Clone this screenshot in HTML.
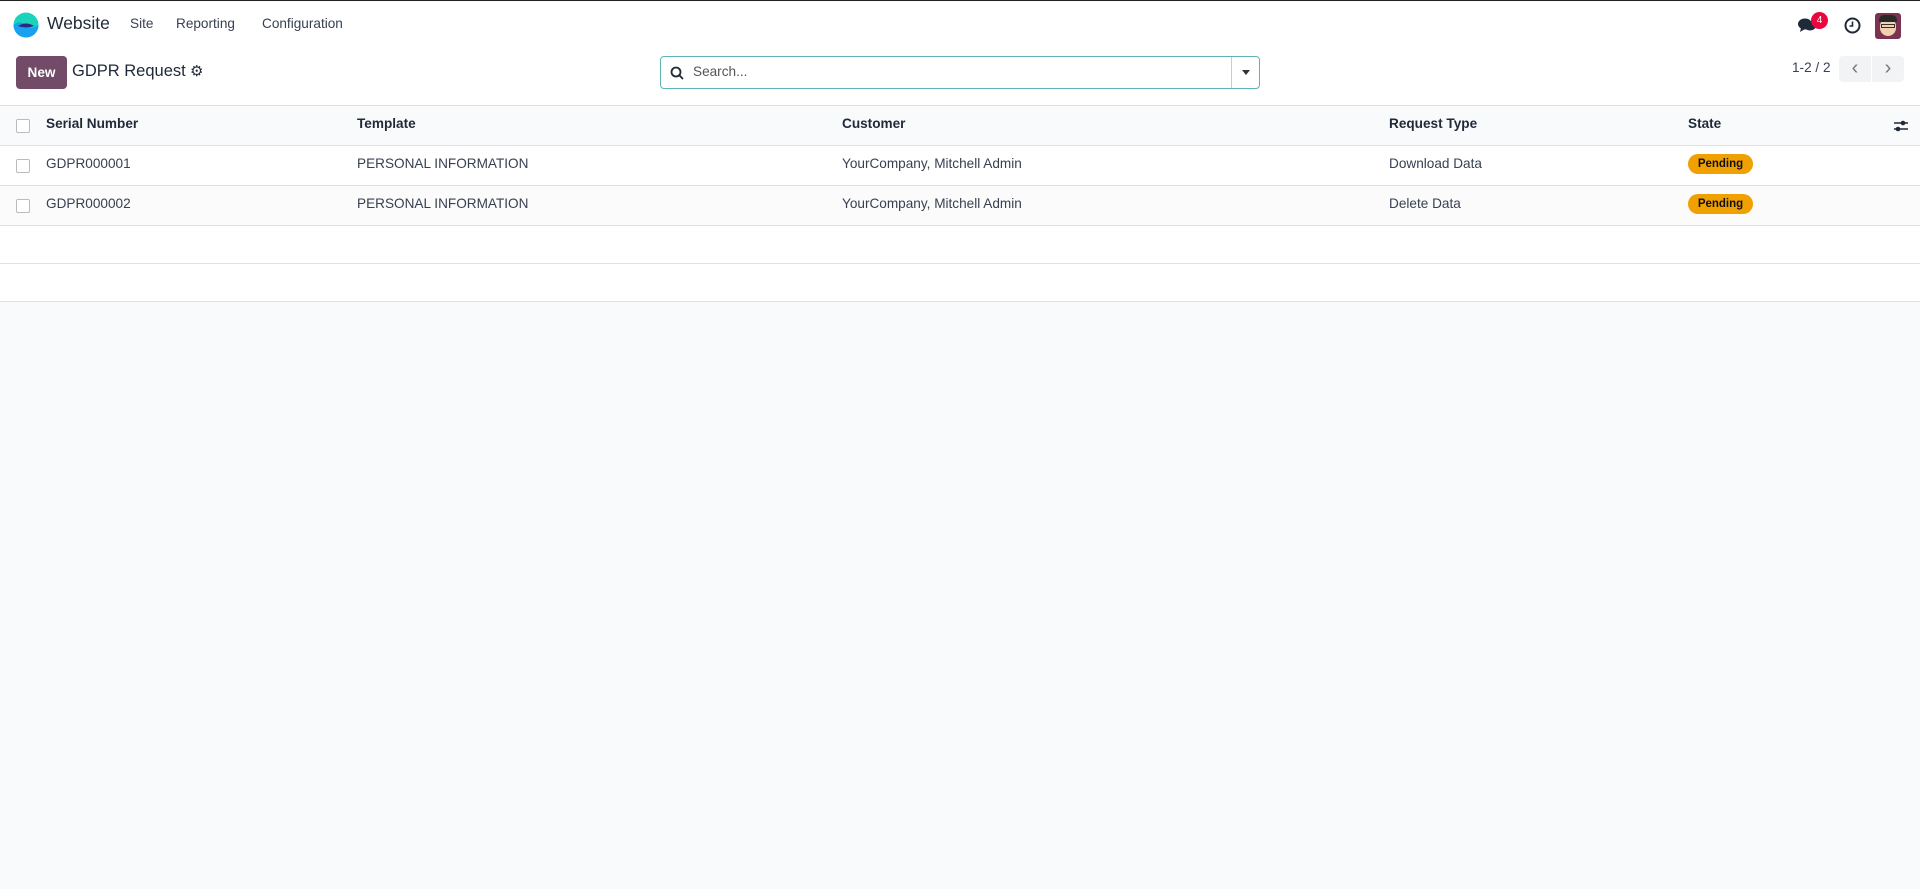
<!DOCTYPE html>
<html><head><meta charset="utf-8"><style>
*{box-sizing:border-box;margin:0;padding:0}
body{width:1920px;height:889px;overflow:hidden;background:#f9fafb;font-family:"Liberation Sans",sans-serif;font-size:13.6px;color:#374151;position:relative;border-top:1px solid #222}
.abs{position:absolute}
.nav{position:absolute;left:0;top:1px;width:1920px;height:46px;background:#fff}
.cp{position:absolute;left:0;top:47px;width:1920px;height:57px;background:#fff}
.row{position:absolute;left:0;width:1920px;border-bottom:1px solid #dee2e6;background:#fff}
.cb{position:absolute;left:16px;width:14px;height:14px;border:1px solid #bbb;background:#fff;border-radius:2px}
.t{position:absolute;white-space:nowrap}
.h{font-weight:bold;color:#1f2937}
.badge{position:absolute;left:1688px;width:65px;height:20px;border-radius:10px;background:#f0a000;color:#111;font-size:11.5px;font-weight:bold;text-align:center;line-height:20px}
</style></head><body>
<div class="nav">
<svg class="abs" style="left:13px;top:10px" width="26" height="26" viewBox="0 0 26 26"><circle cx="13" cy="13" r="12.5" fill="#1ad3bb"/><path d="M0.5 13 Q7 8 13 13 T25.5 13 A12.5 12.5 0 0 1 0.5 13Z" fill="#1aa0f0"/><path d="M5 14 Q13 9 21 14 Q13 17 5 14Z" fill="#2b2a7a"/></svg>
<div class="t" style="left:47px;top:11px;font-size:17.5px;color:#1f2937">Website</div>
<div class="t" style="left:130px;top:14px">Site</div>
<div class="t" style="left:176px;top:14px">Reporting</div>
<div class="t" style="left:262px;top:14px">Configuration</div>
<svg class="abs" style="left:1797px;top:14px" width="20" height="18" viewBox="0 0 20 18"><ellipse cx="8" cy="8" rx="7" ry="5.5" fill="#1f2937"/><path d="M4 12 L3 16 L8 13Z" fill="#1f2937"/><ellipse cx="13" cy="10" rx="6" ry="4.5" fill="#1f2937"/></svg>
<div class="abs" style="left:1811px;top:10px;width:17px;height:17px;border-radius:9px;background:#e8083e;color:#fff;font-size:10px;text-align:center;line-height:17px">4</div>
<svg class="abs" style="left:1844px;top:15px" width="17" height="17" viewBox="0 0 17 17"><circle cx="8.5" cy="8.5" r="7" fill="none" stroke="#1f2937" stroke-width="2"/><path d="M8.5 4.5V9H5.5" fill="none" stroke="#1f2937" stroke-width="1.6"/></svg>
<div class="abs" style="left:1875px;top:11px;width:26px;height:26px;border-radius:3px;background:#7a3350;overflow:hidden"><div class="abs" style="left:5px;top:5px;width:16px;height:18px;border-radius:8px;background:#f3d0b0"></div><div class="abs" style="left:4px;top:2px;width:18px;height:7px;border-radius:5px 5px 0 0;background:#2a2a2a"></div><div class="abs" style="left:6px;top:11px;width:14px;height:4px;border:1px solid #333"></div></div>
</div>
<div class="cp">
<div class="abs" style="left:16px;top:8px;width:51px;height:33px;background:#714b67;border-radius:4px;color:#fff;font-weight:bold;text-align:center;line-height:33px">New</div>
<div class="t" style="left:72px;top:14px;font-size:16.5px;color:#1f2937">GDPR Request</div>
<div class="t" style="left:190px;top:14px;font-size:15px;color:#1f2937">⚙</div>
<div class="abs" style="left:660px;top:8px;width:600px;height:33px;border:1px solid #5fb3b6;border-radius:4px;background:#fff">
<svg class="abs" style="left:9px;top:9px" width="14" height="14" viewBox="0 0 14 14"><circle cx="6" cy="6" r="4.5" fill="none" stroke="#1f2937" stroke-width="1.8"/><path d="M9.3 9.3L13 13" stroke="#1f2937" stroke-width="1.8"/></svg>
<div class="t" style="left:32px;top:7px;color:#555">Search...</div>
<div class="abs" style="left:570px;top:0;width:1px;height:31px;background:#ccc"></div>
<div class="abs" style="left:581px;top:13px;width:0;height:0;border-left:4.5px solid transparent;border-right:4.5px solid transparent;border-top:5px solid #333"></div>
</div>
<div class="t" style="left:1792px;top:12px;color:#374151">1-2 / 2</div>
<div class="abs" style="left:1839px;top:8px;width:32px;height:26px;background:#f1f3f5;border-radius:4px 0 0 4px;color:#777;text-align:center;line-height:24px;font-size:20px">‹</div>
<div class="abs" style="left:1872px;top:8px;width:32px;height:26px;background:#f1f3f5;border-radius:0 4px 4px 0;color:#777;text-align:center;line-height:24px;font-size:20px">›</div>
</div>
<div class="row" style="top:104px;height:41px;background:#f9fafb;border-top:1px solid #dee2e6">
<div class="cb" style="top:13px"></div>
<div class="t h" style="left:46px;top:10px">Serial Number</div>
<div class="t h" style="left:357px;top:10px">Template</div>
<div class="t h" style="left:842px;top:10px">Customer</div>
<div class="t h" style="left:1389px;top:10px">Request Type</div>
<div class="t h" style="left:1688px;top:10px">State</div>
<svg class="abs" style="left:1893px;top:13px" width="16" height="14" viewBox="0 0 16 14"><path d="M1 4H15M1 10H15" stroke="#1f2937" stroke-width="1.5"/><circle cx="10" cy="4" r="2.3" fill="#1f2937"/><circle cx="5" cy="10" r="2.3" fill="#1f2937"/></svg>
</div>
<div class="row" style="top:145px;height:40px">
<div class="cb" style="top:13px"></div>
<div class="t" style="left:46px;top:10px">GDPR000001</div>
<div class="t" style="left:357px;top:10px">PERSONAL INFORMATION</div>
<div class="t" style="left:842px;top:10px">YourCompany, Mitchell Admin</div>
<div class="t" style="left:1389px;top:10px">Download Data</div>
<div class="badge" style="top:8px">Pending</div>
</div>
<div class="row" style="top:185px;height:40px;background:#fbfbfb">
<div class="cb" style="top:13px"></div>
<div class="t" style="left:46px;top:10px">GDPR000002</div>
<div class="t" style="left:357px;top:10px">PERSONAL INFORMATION</div>
<div class="t" style="left:842px;top:10px">YourCompany, Mitchell Admin</div>
<div class="t" style="left:1389px;top:10px">Delete Data</div>
<div class="badge" style="top:8px">Pending</div>
</div>
<div class="row" style="top:225px;height:38px"></div>
<div class="row" style="top:263px;height:38px"></div>
</body></html>
